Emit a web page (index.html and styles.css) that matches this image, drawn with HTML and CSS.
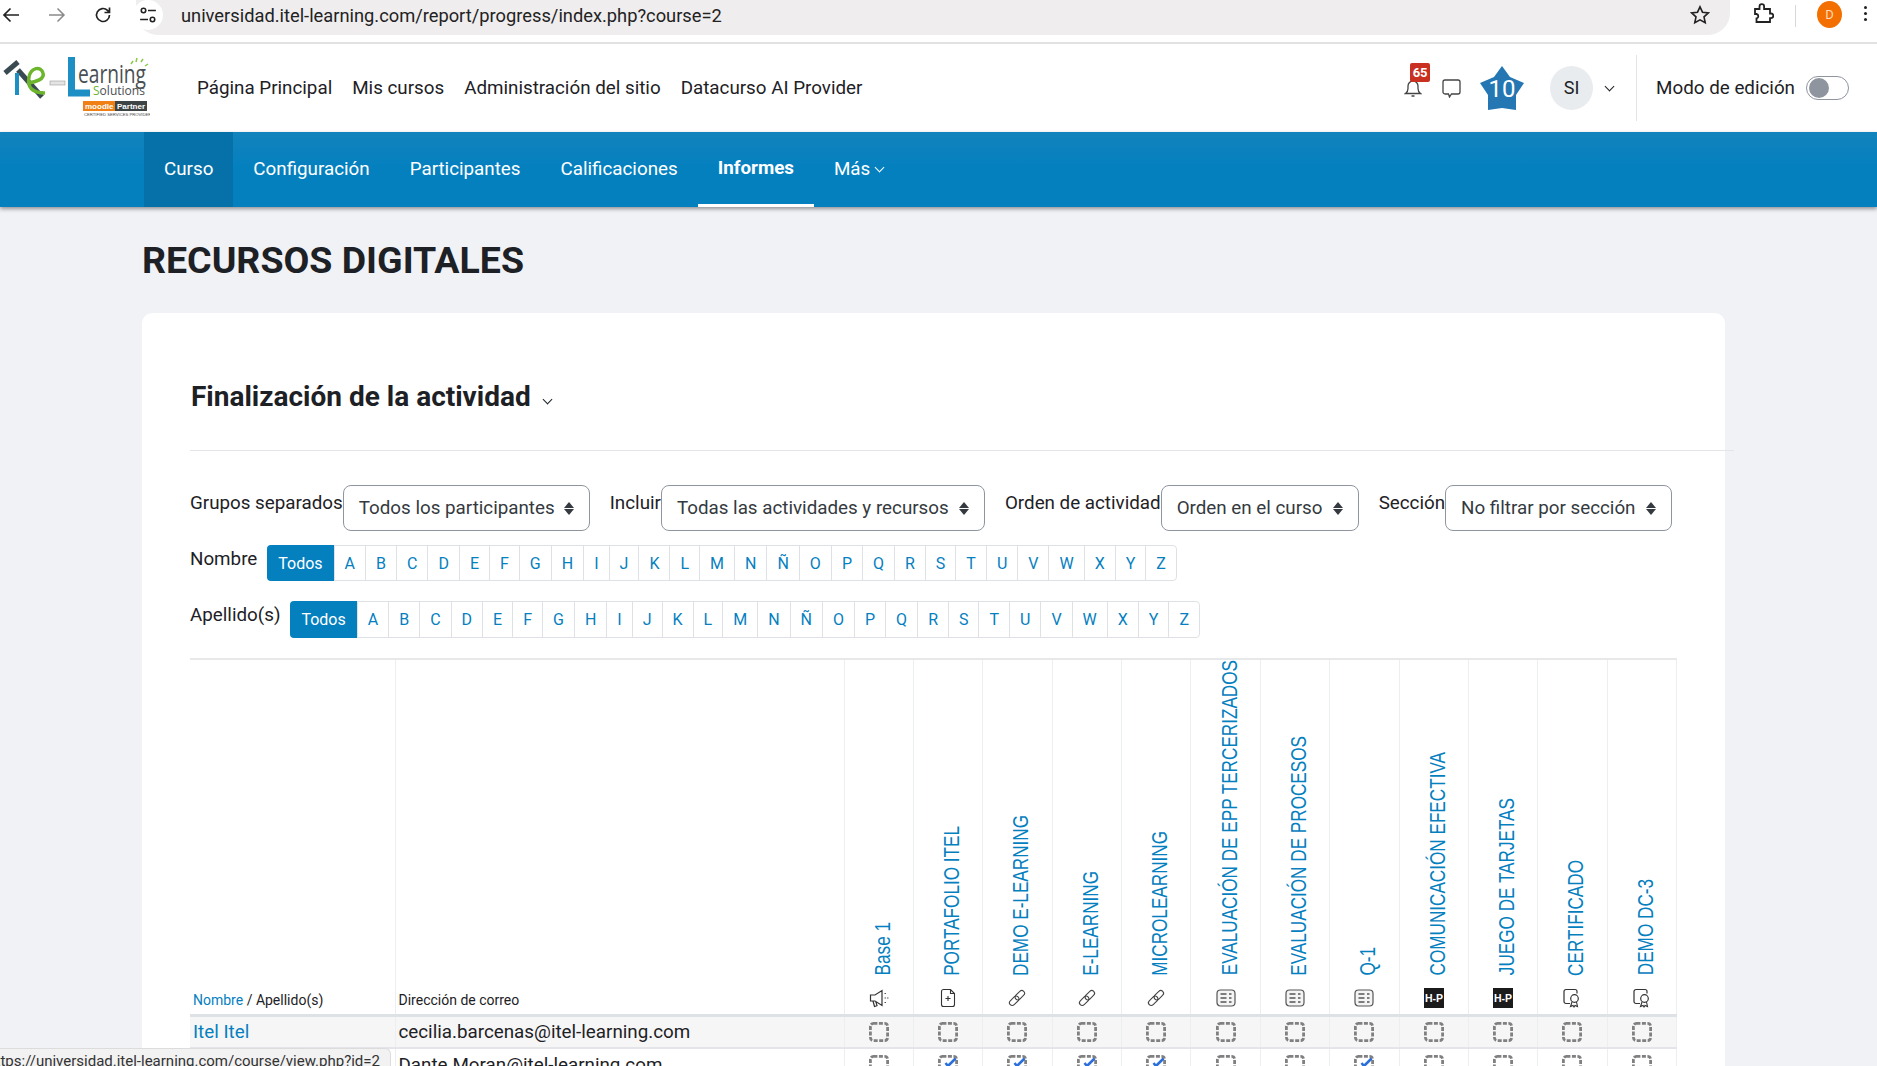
FILE: index.html
```html
<!DOCTYPE html>
<html lang="es">
<head>
    <meta charset="UTF-8">
    <meta name="viewport" content="width=device-width, initial-scale=1.0">
    <title>Finalización de la actividad</title>
    <link rel="stylesheet" href="styles.css">
</head>
<body>
    <svg class="defs" width="0" height="0">
        <symbol id="i-box" viewBox="0 0 20 20"><rect x="1.400" y="1.400" width="17.200" height="17.200" rx="3" fill="none" stroke="#808080" stroke-width="2.800" stroke-dasharray="4 1.500"/></symbol>
        <symbol id="i-check" viewBox="0 0 20 20"><rect x="1.400" y="1.400" width="17.200" height="17.200" rx="3" fill="none" stroke="#808080" stroke-width="2.800" stroke-dasharray="4 1.500"/><path d="M7.500 8l2.500 3L17.500 3.500" fill="none" stroke="#2a6fdb" stroke-width="2.600"/></symbol>
        <symbol id="i-mega" viewBox="0 0 20 20"><path d="M1.500 7h4.500l7-4.500v15l-7-4.500H1.500zM4 13l1.500 5.500 2.500-.8-1.200-4" fill="none" stroke="#333" stroke-width="1.200"/><path d="M15.500 5.500h2.500M15.500 10h4M15.500 14.500h2.500" stroke="#555" stroke-width="1.200" stroke-dasharray="1.500 1"/></symbol>
        <symbol id="i-file" viewBox="0 0 20 20"><path d="M5.500 1.500h7l4 4v11a2 2 0 0 1-2 2h-9a2 2 0 0 1-2-2v-13a2 2 0 0 1 2-2zM12.500 1.500v4h4M10 8v5M7.500 10.500h5" fill="none" stroke="#333" stroke-width="1.100"/></symbol>
        <symbol id="i-link" viewBox="0 0 20 20"><g transform="rotate(-45 10 10)" fill="none" stroke="#444" stroke-width="1.100"><rect x="0.500" y="7.250" width="11" height="5.500" rx="2.750"/><rect x="8.500" y="7.250" width="11" height="5.500" rx="2.750"/></g></symbol>
        <symbol id="i-form" viewBox="0 0 20 20"><rect x="1" y="2" width="18" height="16" rx="3.500" fill="#f4f4f4" stroke="#555" stroke-width="1.200"/><path d="M4.500 6h6M4.500 10h6M4.500 14h6M13 6h2.500M13 10h2.500M13 14h2.500" stroke="#555" stroke-width="1.300"/></symbol>
        <symbol id="i-hp" viewBox="0 0 20 20"><rect width="20" height="20" fill="#1b1b1b"/><text x="10" y="14" text-anchor="middle" fill="#fff" font-family="Liberation Sans" font-size="10.500" font-weight="700">H-P</text></symbol>
        <symbol id="i-cert" viewBox="0 0 20 20"><path d="M8 15.500H4a2 2 0 0 1-2-2V3.500a2 2 0 0 1 2-2h9a2 2 0 0 1 2 2v2" fill="none" stroke="#333" stroke-width="1.200"/><circle cx="12.500" cy="10.500" r="3.800" fill="none" stroke="#333" stroke-width="1.200"/><path d="M10 14l-1.500 4.500 2.500-1 1 1.500 1-1.500 2.500 1L14.500 14" fill="none" stroke="#333" stroke-width="1.100"/></symbol>
    </svg>

    <div class="browser">
        <svg class="b-icon" width="18" height="18" viewBox="0 0 18 18"><path d="M17 9H2M8.500 2.500L2 9l6.500 6.500" fill="none" stroke="#222" stroke-width="1.700"/></svg>
        <svg class="b-icon fwd" width="18" height="18" viewBox="0 0 18 18"><path d="M1 9h15M9.500 2.500L16 9l-6.500 6.500" fill="none" stroke="#8a8a8a" stroke-width="1.500"/></svg>
        <svg class="b-icon reload" width="18" height="18" viewBox="0 0 18 18"><path d="M15.500 9a6.500 6.500 0 1 1-2-4.700L15.500 6.300M15.500 1.500v5h-5" fill="none" stroke="#222" stroke-width="1.700"/></svg>
        <div class="url-pill">
            <span class="tune"><svg width="18" height="18" viewBox="0 0 16 16"><circle cx="4" cy="4" r="2" fill="none" stroke="#222" stroke-width="1.400"/><path d="M8 4h7M1 12h7" stroke="#222" stroke-width="1.400"/><circle cx="12" cy="12" r="2" fill="none" stroke="#222" stroke-width="1.400"/></svg></span>
            <span class="url">universidad.itel-learning.com/report/progress/index.php?course=2</span>
            <svg class="url-star" width="20" height="20" viewBox="0 0 20 20"><path d="M10 1.800l2.500 5.400 5.900.7-4.400 4 1.200 5.800L10 14.800l-5.200 2.900L6 11.900l-4.400-4 5.900-.7z" fill="none" stroke="#222" stroke-width="1.600"/></svg>
        </div>
        <svg class="puzzle" width="22" height="22" viewBox="0 0 22 22"><path d="M3 7h4.500V4.500a2.300 2.300 0 0 1 4.600 0V7H18v4.500h1a2.300 2.300 0 0 1 0 4.600h-1V20H4.500v-3.500a2.300 2.300 0 0 0 0-4.500H3z" fill="none" stroke="#222" stroke-width="1.800"/></svg>
        <span class="b-sep"></span>
        <span class="b-avatar">D</span>
        <span class="b-dots"></span>
    </div>

    <header class="topbar">
        <a class="logo">
            <svg width="150" height="66" viewBox="0 3 150 66">
                <path d="M18 10L5 21" stroke="#3a4a52" stroke-width="5"/>
                <path d="M18 18l24 27" stroke="#3a4a52" stroke-width="5"/>
                <path d="M17 21v22" stroke="#1c8fc4" stroke-width="4"/>
                <path d="M28 31C36 30 45 27 43 21 41 14 31 15 29 25 27 35 32 41 45 41" fill="none" stroke="#6cb52d" stroke-width="3.500"/>
                <rect x="50" y="29" width="15" height="4" fill="#e4e4e4" stroke="#999" stroke-width=".6"/>
                <path d="M71.500 5v36H90" fill="none" stroke="#1d8fc5" stroke-width="7"/>
                <text x="78" y="31" class="logo-big" textLength="68" lengthAdjust="spacingAndGlyphs">earning</text>
                <text x="93" y="43" class="logo-small" textLength="52" lengthAdjust="spacingAndGlyphs"><tspan fill="#6cb52d">S</tspan>olutions</text>
                <path d="M131 12l2-3M136 10l1-4M141 10l2-3M145 14l3-2" stroke="#8cc84b" stroke-width="1.500"/>
                <rect x="83" y="49" width="32" height="10" fill="#f07f16"/>
                <rect x="115" y="49" width="32" height="10" fill="#3d4445"/>
                <text x="85" y="57" class="logo-badge">moodle</text>
                <text x="117" y="57" class="logo-badge">Partner</text>
                <text x="84" y="64" class="logo-tiny">CERTIFIED SERVICES PROVIDER</text>
            </svg>
        </a>
        <nav class="primary">
            <a>Página Principal</a>
            <a>Mis cursos</a>
            <a>Administración del sitio</a>
            <a>Datacurso AI Provider</a>
        </nav>
        <div class="usermenu">
            <span class="bell">
                <svg width="18" height="18" viewBox="0 0 18 18"><path d="M1.500 14.500c1.500-1 2.500-2.500 2.500-5V7a5 5 0 0 1 10 0v2.500c0 2.500 1 4 2.500 5zM7.500 17h3" fill="none" stroke="#444" stroke-width="1.300"/></svg>
                <span class="badge">65</span>
            </span>
            <svg class="chat" width="19" height="19" viewBox="0 0 19 19"><path d="M3 1h13a2 2 0 0 1 2 2v10a2 2 0 0 1-2 2H9.500l-2 3-1-3H3a2 2 0 0 1-2-2V3a2 2 0 0 1 2-2z" fill="none" stroke="#444" stroke-width="1.300"/></svg>
            <svg class="level" width="44" height="44" viewBox="0 0 44 44">
                <path d="M22 0l8 11 14 6-8 12v15l-14-2-14 2V29L0 17l14-6z" fill="#2577b3"/>
                <text x="22" y="31" text-anchor="middle" class="level-text">10</text>
            </svg>
            <span class="avatar">SI</span>
            <span class="chev"></span>
            <span class="divider"></span>
            <span class="edit-label">Modo de edición</span>
            <span class="toggle"><span class="knob"></span></span>
        </div>
    </header>

    <nav class="secondary">
        <a class="active-tab">Curso</a>
        <a>Configuración</a>
        <a>Participantes</a>
        <a>Calificaciones</a>
        <a class="current">Informes</a>
        <a>Más <span class="chev-sm"></span></a>
    </nav>

    <main class="page">
        <h1>RECURSOS DIGITALES</h1>
        <section class="card">
            <h2>Finalización de la actividad <span class="chev-h"></span></h2>
            <hr>
            <div class="filters">
                <label>Grupos separados</label>
                <div class="sel w1">Todos los participantes<span class="updown"></span></div>
                <label class="ml">Incluir</label>
                <div class="sel w2">Todas las actividades y recursos<span class="updown"></span></div>
                <label class="ml">Orden de actividad</label>
                <div class="sel w3">Orden en el curso<span class="updown"></span></div>
                <label class="ml">Sección</label>
                <div class="sel w4">No filtrar por sección<span class="updown"></span></div>
            </div>

            <div class="initials first">
                <span class="init-label">Nombre</span>
                <ul class="letters">
                    <li class="on">Todos</li><li>A</li><li>B</li><li>C</li><li>D</li><li>E</li><li>F</li><li>G</li><li>H</li><li>I</li><li>J</li><li>K</li><li>L</li><li>M</li><li>N</li><li>Ñ</li><li>O</li><li>P</li><li>Q</li><li>R</li><li>S</li><li>T</li><li>U</li><li>V</li><li>W</li><li>X</li><li>Y</li><li>Z</li>
                </ul>
            </div>
            <div class="initials second">
                <span class="init-label">Apellido(s)</span>
                <ul class="letters">
                    <li class="on">Todos</li><li>A</li><li>B</li><li>C</li><li>D</li><li>E</li><li>F</li><li>G</li><li>H</li><li>I</li><li>J</li><li>K</li><li>L</li><li>M</li><li>N</li><li>Ñ</li><li>O</li><li>P</li><li>Q</li><li>R</li><li>S</li><li>T</li><li>U</li><li>V</li><li>W</li><li>X</li><li>Y</li><li>Z</li>
                </ul>
            </div>

            <table class="progress">
                <colgroup>
                    <col class="c-name"><col class="c-mail">
                    <col span="12" class="c-act">
                </colgroup>
                <thead>
                    <tr>
                        <th class="th-text"><a>Nombre</a> / Apellido(s)</th>
                        <th class="th-text">Dirección de correo</th>
                        <th><div class="act"><span class="vert">Base 1</span><svg class="ico"><use href="#i-mega"/></svg></div></th>
                        <th><div class="act"><span class="vert">PORTAFOLIO ITEL</span><svg class="ico"><use href="#i-file"/></svg></div></th>
                        <th><div class="act"><span class="vert">DEMO E-LEARNING</span><svg class="ico"><use href="#i-link"/></svg></div></th>
                        <th><div class="act"><span class="vert">E-LEARNING</span><svg class="ico"><use href="#i-link"/></svg></div></th>
                        <th><div class="act"><span class="vert">MICROLEARNING</span><svg class="ico"><use href="#i-link"/></svg></div></th>
                        <th><div class="act"><span class="vert">EVALUACIÓN DE EPP TERCERIZADOS</span><svg class="ico"><use href="#i-form"/></svg></div></th>
                        <th><div class="act"><span class="vert">EVALUACIÓN DE PROCESOS</span><svg class="ico"><use href="#i-form"/></svg></div></th>
                        <th><div class="act"><span class="vert">Q-1</span><svg class="ico"><use href="#i-form"/></svg></div></th>
                        <th><div class="act"><span class="vert">COMUNICACIÓN EFECTIVA</span><svg class="ico"><use href="#i-hp"/></svg></div></th>
                        <th><div class="act"><span class="vert">JUEGO DE TARJETAS</span><svg class="ico"><use href="#i-hp"/></svg></div></th>
                        <th><div class="act"><span class="vert">CERTIFICADO</span><svg class="ico"><use href="#i-cert"/></svg></div></th>
                        <th><div class="act"><span class="vert">DEMO DC-3</span><svg class="ico"><use href="#i-cert"/></svg></div></th>
                    </tr>
                </thead>
                <tbody>
                    <tr class="odd">
                        <td><a>Itel Itel</a></td>
                        <td>cecilia.barcenas@itel-learning.com</td>
                        <td><svg class="box"><use href="#i-box"/></svg></td>
                        <td><svg class="box"><use href="#i-box"/></svg></td>
                        <td><svg class="box"><use href="#i-box"/></svg></td>
                        <td><svg class="box"><use href="#i-box"/></svg></td>
                        <td><svg class="box"><use href="#i-box"/></svg></td>
                        <td><svg class="box"><use href="#i-box"/></svg></td>
                        <td><svg class="box"><use href="#i-box"/></svg></td>
                        <td><svg class="box"><use href="#i-box"/></svg></td>
                        <td><svg class="box"><use href="#i-box"/></svg></td>
                        <td><svg class="box"><use href="#i-box"/></svg></td>
                        <td><svg class="box"><use href="#i-box"/></svg></td>
                        <td><svg class="box"><use href="#i-box"/></svg></td>
                    </tr>
                    <tr>
                        <td><a>Dante Moran</a></td>
                        <td>Dante.Moran@itel-learning.com</td>
                        <td><svg class="box"><use href="#i-box"/></svg></td>
                        <td><svg class="box"><use href="#i-check"/></svg></td>
                        <td><svg class="box"><use href="#i-check"/></svg></td>
                        <td><svg class="box"><use href="#i-check"/></svg></td>
                        <td><svg class="box"><use href="#i-check"/></svg></td>
                        <td><svg class="box"><use href="#i-box"/></svg></td>
                        <td><svg class="box"><use href="#i-box"/></svg></td>
                        <td><svg class="box"><use href="#i-check"/></svg></td>
                        <td><svg class="box"><use href="#i-box"/></svg></td>
                        <td><svg class="box"><use href="#i-box"/></svg></td>
                        <td><svg class="box"><use href="#i-box"/></svg></td>
                        <td><svg class="box"><use href="#i-box"/></svg></td>
                    </tr>
                </tbody>
            </table>
        </section>
    </main>

    <div class="status-bubble"><span>https://universidad.itel-learning.com/course/view.php?id=2</span></div>
</body>
</html>
```
FILE: styles.css
```css
* {
    box-sizing: border-box;
}
html, body {
    height: 1066px;
    overflow: hidden;
}
body {
    margin: 0;
    font-family: Roboto, "Liberation Sans", sans-serif;
    font-size: 18.8px;
    color: #1d2125;
    background-color: #f1f2f6;
    position: relative;
}
.defs {
    position: absolute;
}

/* browser chrome */
.browser {
    display: flex;
    align-items: flex-start;
    height: 44px;
    background-color: #fff;
    border-bottom: 2px solid #e2e2e2;
}
.b-icon {
    margin: 6px 0 0 2px;
    flex: none;
}
.b-icon.fwd {
    margin-left: 28px;
}
.b-icon.reload {
    margin-left: 28px;
}
.url-pill {
    display: flex;
    align-items: center;
    width: 1594px;
    height: 35px;
    margin-left: 24px;
    padding: 0 20px 5px 0;
    background-color: #efedee;
    border-radius: 0 0 22px 22px;
}
.tune {
    display: flex;
    align-items: center;
    justify-content: center;
    width: 30px;
    height: 30px;
    margin-left: -3px;
    background-color: #fff;
    border-radius: 50%;
}
.url {
    margin-left: 18px;
    font-size: 18.3px;
    color: #222;
}
.url-star {
    margin-left: auto;
}
.puzzle {
    margin: 2px 0 0 22px;
}
.b-sep {
    width: 1px;
    height: 22px;
    margin: 5px 0 0 21px;
    background-color: #d8d8d8;
}
.b-avatar {
    width: 25px;
    height: 27px;
    margin: 1px 0 0 21px;
    border-radius: 50%;
    background-color: #f26f00;
    color: #ffd9b8;
    font-size: 13px;
    line-height: 27px;
    text-align: center;
}
.b-dots {
    width: 3px;
    height: 3px;
    margin: 6px 0 0 22px;
    border-radius: 50%;
    background-color: #222;
    box-shadow: 0 6px 0 #222, 0 12px 0 #222;
}

/* moodle top bar */
.topbar {
    display: flex;
    align-items: center;
    height: 88px;
    background-color: #fff;
}
.logo {
    height: 66px;
}
.logo-big {
    font-family: "Open Sans", sans-serif;
    font-size: 26px;
    fill: #4a4f52;
}
.logo-small {
    font-family: "Open Sans", sans-serif;
    font-size: 13px;
    fill: #4a4f52;
}
.logo-badge {
    font-family: "Liberation Sans", sans-serif;
    font-size: 8px;
    font-weight: 700;
    fill: #fff;
}
.logo-tiny {
    font-family: "Liberation Sans", sans-serif;
    font-size: 4.200px;
    fill: #444;
}
.primary {
    display: flex;
    gap: 20px;
    margin-left: 47px;
}
.usermenu {
    display: flex;
    align-items: center;
    margin-left: auto;
    padding-right: 28px;
}
.bell {
    position: relative;
    display: flex;
}
.badge {
    position: absolute;
    top: -16px;
    left: 6px;
    width: 20px;
    height: 19px;
    background-color: #c9301f;
    border-radius: 2px;
    color: #fff;
    font-size: 13px;
    font-weight: 700;
    line-height: 19px;
    text-align: center;
}
.chat {
    margin-left: 20px;
}
.level {
    margin-left: 19px;
}
.level-text {
    font-family: Roboto, sans-serif;
    font-size: 24px;
    fill: #fff;
}
.avatar {
    width: 43px;
    height: 44px;
    margin-left: 26px;
    border-radius: 50%;
    background-color: #e9ecef;
    text-align: center;
    line-height: 44px;
    font-size: 18px;
}
.chev {
    width: 7px;
    height: 7px;
    margin: -4px 0 0 13px;
    border-right: 1.500px solid #1d2125;
    border-bottom: 1.500px solid #1d2125;
    transform: rotate(45deg);
}
.divider {
    width: 1px;
    height: 66px;
    margin-left: 23px;
    background-color: #e3e5e8;
}
.edit-label {
    margin-left: 19px;
}
.toggle {
    display: flex;
    align-items: center;
    width: 43px;
    height: 24px;
    margin-left: 11px;
    padding-left: 2px;
    border: 1px solid #8f959e;
    border-radius: 12px;
}
.knob {
    width: 20px;
    height: 20px;
    border-radius: 50%;
    background-color: #8f959e;
}

/* blue course nav */
.secondary {
    display: flex;
    height: 75px;
    padding-left: 144px;
    background: linear-gradient(#1283bc, #0580bf 45%);
    box-shadow: 0 2px 4px rgba(0, 0, 0, 0.4);
    color: #fff;
    position: relative;
}
.secondary a {
    display: flex;
    align-items: center;
    padding: 0 20px 1px;
    white-space: pre;
}
.secondary .active-tab {
    background-color: #0671a8;
}
.secondary .current {
    font-weight: 700;
    border-bottom: 3px solid #fff;
    padding-bottom: 0;
}
.chev-sm {
    display: inline-block;
    width: 7px;
    height: 7px;
    margin: -3px 0 0 1px;
    border-right: 1.500px solid #fff;
    border-bottom: 1.500px solid #fff;
    transform: rotate(45deg);
}

/* page */
.page {
    padding: 31px 0 0 142px;
}
h1 {
    margin: 0 0 31px;
    font-size: 37.5px;
    font-weight: 700;
    line-height: 44px;
    color: #1d2125;
}
.card {
    width: 1583px;
    height: 800px;
    padding: 66px 0 0 48px;
    background-color: #fff;
    border-radius: 10px 10px 0 0;
}
h2 {
    margin: 0 0 0 1px;
    font-size: 28px;
    font-weight: 700;
    line-height: 36px;
}
.chev-h {
    display: inline-block;
    width: 7px;
    height: 7px;
    margin: 0 0 3px 6px;
    border-right: 1.500px solid #1d2125;
    border-bottom: 1.500px solid #1d2125;
    transform: rotate(45deg);
}
hr {
    width: 1544px;
    height: 1px;
    margin: 35px 0 34px;
    border: none;
    background-color: #e3e5e8;
}
.filters {
    display: flex;
    align-items: flex-start;
}
.filters label {
    margin-top: 5px;
    line-height: 26px;
}
.filters .ml {
    margin-left: 20px;
}
.sel {
    display: flex;
    align-items: center;
    justify-content: space-between;
    height: 46px;
    padding: 0 15px;
    border: 1px solid #8f959e;
    border-radius: 8px;
    color: #343a40;
}
.w1 { width: 247px; }
.w2 { width: 324px; }
.w3 { width: 198px; }
.w4 { width: 227px; }
.updown {
    position: relative;
    width: 10px;
    height: 13px;
}
.updown::before, .updown::after {
    content: "";
    position: absolute;
    left: 0;
    border-left: 5px solid transparent;
    border-right: 5px solid transparent;
}
.updown::before {
    top: 0;
    border-bottom: 6px solid #343a40;
}
.updown::after {
    bottom: 0;
    border-top: 6px solid #343a40;
}
.initials {
    display: flex;
    align-items: flex-start;
}
.initials.first {
    margin-top: 14px;
}
.initials.second {
    margin-top: 20px;
}
.init-label {
    line-height: 28px;
    margin-right: 10px;
}
.letters {
    display: flex;
    margin: 0;
    padding: 0;
    list-style: none;
    border: 1px solid #dee2e6;
    border-radius: 4px;
    font-size: 16px;
    color: #0580bf;
}
.letters li {
    display: flex;
    align-items: center;
    padding: 0 10px;
    border-left: 1px solid #dee2e6;
    height: 34px;
}
.second .letters li {
    height: 35px;
}
.letters li:first-child {
    border-left: none;
}
.letters .on {
    margin: -1px 0 -1px -1px;
    height: 36px;
    padding: 0 11px;
    background-color: #0580bf;
    border-radius: 4px 0 0 4px;
    color: #fff;
}
.second .letters .on {
    height: 37px;
}

/* completion table */
.progress {
    width: 1487px;
    margin-top: 20px;
    table-layout: fixed;
    border-collapse: collapse;
    border-top: 2px solid #e6e8ea;
}
.c-name { width: 205px; }
.c-mail { width: 449px; }
.progress th {
    height: 356px;
    padding: 0 0 6px;
    vertical-align: bottom;
    font-weight: 400;
    border-left: 1px solid #edeef0;
    border-right: 1px solid #edeef0;
    border-bottom: 3px solid #dee2e6;
}
.progress th:first-child {
    border-left: none;
}
.progress .th-text {
    padding: 0 0 4px 3px;
    font-size: 14px;
    line-height: 20px;
    text-align: left;
}
.th-text a, .progress td a {
    color: #0580bf;
}
.act {
    display: flex;
    flex-direction: column;
    align-items: center;
    gap: 12px;
}
.vert {
    writing-mode: vertical-rl;
    transform: translateX(3px) rotate(180deg) scaleX(1.25);
    font-family: "Liberation Sans", sans-serif;
    font-size: 17.150px;
    line-height: 20px;
    color: #0580bf;
    white-space: nowrap;
}
.ico {
    width: 20px;
    height: 20px;
}
.progress td {
    height: 33px;
    padding: 0 0 0 3px;
    white-space: nowrap;
    border-bottom: 2px solid #e3e5e8;
    border-left: 1px solid #edeef0;
    border-right: 1px solid #edeef0;
}
.progress td:first-child {
    border-left: none;
}
.progress td:nth-child(n+3) {
    padding: 0;
    text-align: center;
}
.progress tr.odd td {
    background-color: #f6f6f6;
}
.box {
    display: block;
    width: 20px;
    height: 20px;
    margin: 0 auto;
    overflow: visible;
}

/* link preview at the bottom of the window */
.status-bubble {
    position: absolute;
    left: 0;
    bottom: 0;
    display: flex;
    justify-content: flex-end;
    width: 391px;
    height: 18px;
    padding-right: 10px;
    overflow: hidden;
    background-color: #f2f2f2;
    border-top: 1px solid #dcdcdc;
    border-right: 1px solid #dcdcdc;
    border-radius: 0 6px 0 0;
    font-size: 15px;
    line-height: 25px;
    color: #333;
    white-space: nowrap;
}
```
